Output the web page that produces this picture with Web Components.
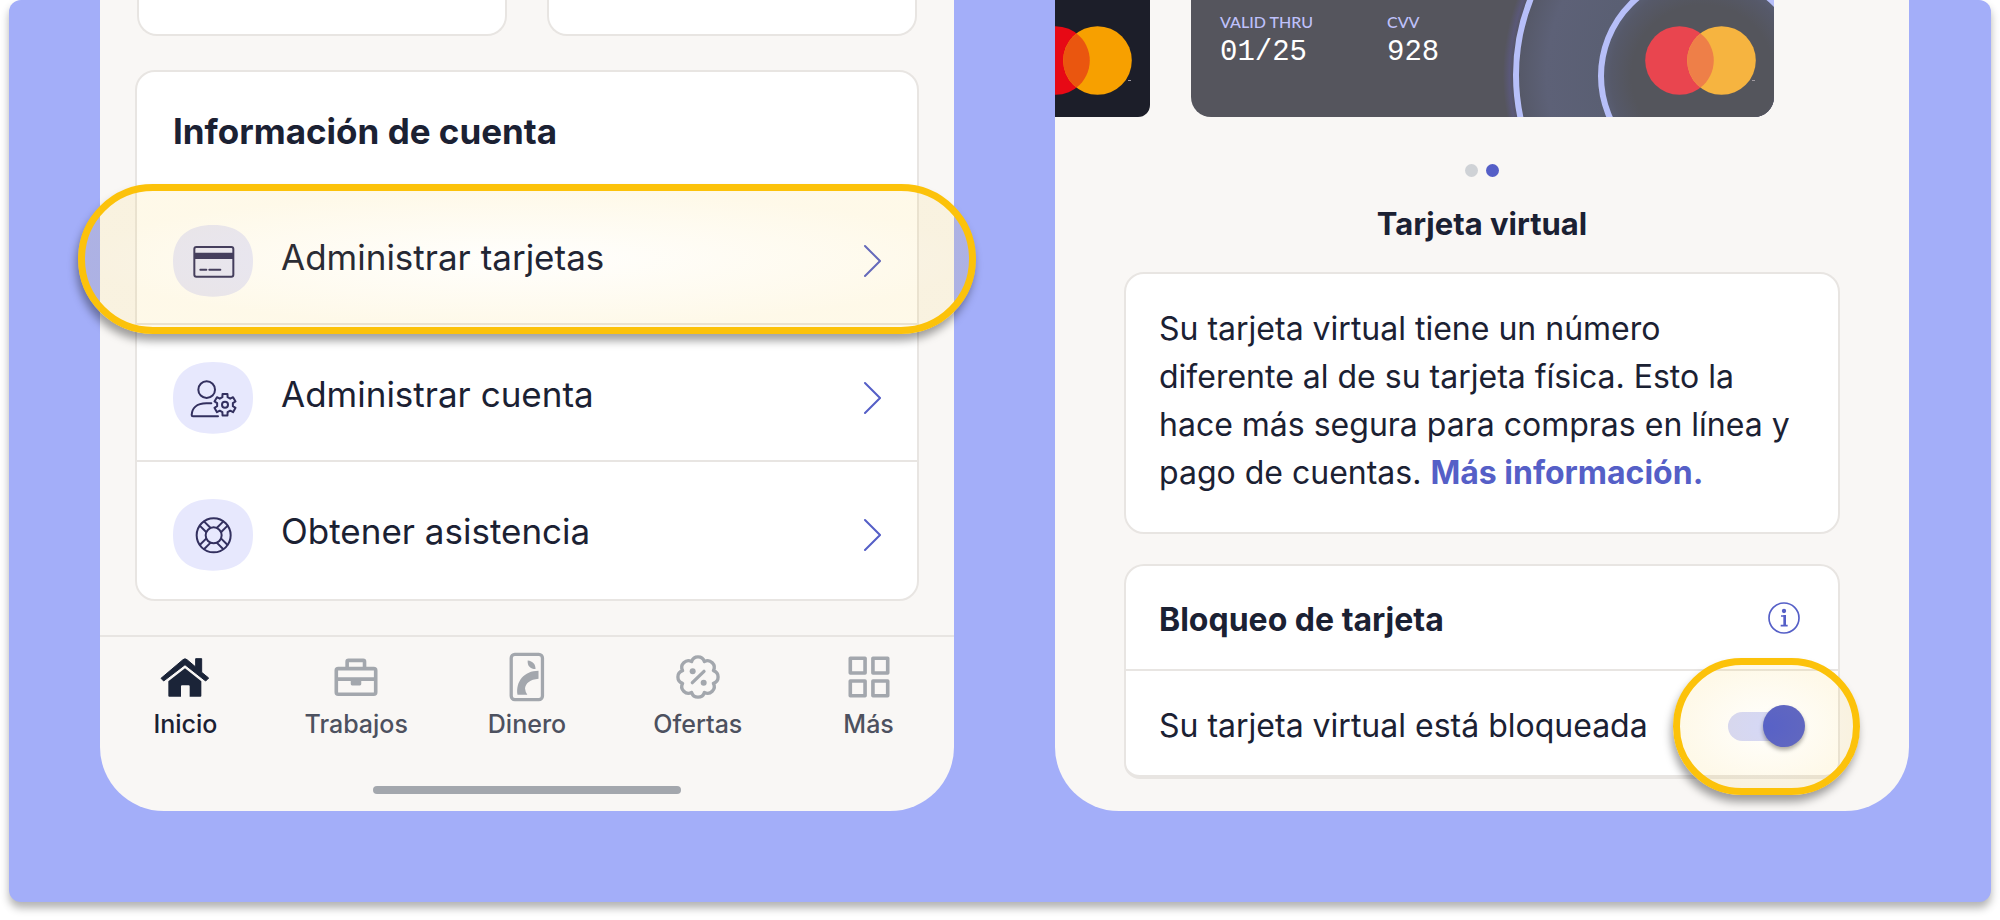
<!DOCTYPE html>
<html lang="es">
<head>
<meta charset="utf-8">
<title>Administrar tarjetas</title>
<style>
  body {
    margin: 0;
    background: #fff;
    color: #1b2133;
    font-family: Inter, "Liberation Sans", sans-serif;
    --line: #e8e5e2;
    --paper: #f9f7f5;
    --accent: #555fc7;
  }
</style>
</head>
<body>
<promo-stage>
  <phone-frame>
    <blank-tiles></blank-tiles>
    <menu-card heading="Información de cuenta">
      <menu-row icon="card" highlighted>Administrar tarjetas</menu-row>
      <menu-row icon="person">Administrar cuenta</menu-row>
      <menu-row icon="buoy">Obtener asistencia</menu-row>
    </menu-card>
    <tab-bar>
      <tab-item icon="home" current>Inicio</tab-item>
      <tab-item icon="jobs">Trabajos</tab-item>
      <tab-item icon="money">Dinero</tab-item>
      <tab-item icon="offers">Ofertas</tab-item>
      <tab-item icon="more">Más</tab-item>
    </tab-bar>
  </phone-frame>
  <phone-frame>
    <card-carousel></card-carousel>
    <info-panel>Su tarjeta virtual tiene un número diferente al de su tarjeta física. Esto la hace más segura para compras en línea y pago de cuentas. <a href="#info">Más información.</a></info-panel>
    <lock-panel heading="Bloqueo de tarjeta">Su tarjeta virtual está bloqueada</lock-panel>
  </phone-frame>
</promo-stage>

<script>
const define = (name, render) => customElements.define(name, class extends HTMLElement {
  constructor() {
    super();
    this.attachShadow({ mode: 'open' });
  }
  connectedCallback() {
    this.shadowRoot.innerHTML = render(this);
  }
});

/* Outline of a cog with evenly spaced rounded teeth. */
function cog(cx, cy, teeth, outer, root) {
  const pts = [];
  for (let i = 0; i < teeth; i++) {
    const mid = -90 + i * 360 / teeth;
    for (const [off, r] of [[-19, root], [-13, outer], [13, outer], [19, root]]) {
      const a = (mid + off) * Math.PI / 180;
      pts.push((cx + r * Math.cos(a)).toFixed(1) + ' ' + (cy + r * Math.sin(a)).toFixed(1));
    }
  }
  return 'M' + pts.join('L') + 'Z';
}

const spokes = [45, 135, 225, 315].map(a =>
  `<path transform="translate(122 109) rotate(${a})" d="M23 -9H49M23 9H49"/>`).join('');

const rowIcons = {
  card: `<rect x="64" y="66" width="117" height="89" rx="6"/><path fill="#33305f" stroke="none" d="M64 83h117v19H64z"/><path d="M82 134h18M109 134h33"/>`,
  person: `<circle cx="101" cy="83" r="25"/><path d="M115 124H100C70 124 57 140 56 159Q56 163 60 163H135"/><path d="${cog(156, 128, 6, 33, 24)}"/><circle cx="156" cy="128" r="9"/>`,
  buoy: `<circle cx="122" cy="109" r="51"/><circle cx="122" cy="109" r="24"/>${spokes}`
};

const tabIcons = {
  home: `<svg width="50" height="39" viewBox="245 112 150 117" fill="currentColor"><path stroke="currentColor" stroke-width="3" stroke-linejoin="round" d="M248 173L314 117q6-5 12 0L352 139V114h18V155L391 172L382 181L320 132L256 181Z"/><path d="M320 143L369 182V225q0 3-3 3H334V197q0-3-3-3H311q-3 0-3 3V228H273q-3 0-3-3V182Z"/></svg>`,
  jobs: `<svg width="44" height="39" viewBox="764 112 134 118" fill="none" stroke="currentColor" stroke-width="11"><rect x="771" y="144" width="120" height="78" rx="6"/><path d="M771 176H891M804 142V123q0-4 4-4h45q4 0 4 4V142"/><rect x="815" y="176" width="32" height="19" rx="4" fill="currentColor" stroke="none"/></svg>`,
  money: `<svg width="36" height="50" viewBox="1288 95 108 152" fill="currentColor"><rect x="1294" y="102" width="95" height="138" rx="11" fill="none" stroke="currentColor" stroke-width="10"/><path d="M1344 121C1360 123 1368 132 1368 147C1352 147 1343 138 1344 121ZM1377 152V176C1352 178 1337 190 1336 206Q1337 217 1343 225H1313C1307 185 1333 152 1377 152Z"/></svg>`,
  offers: `<svg width="44" height="44" viewBox="407 104 132 132" fill="none" stroke="currentColor" stroke-width="10" stroke-linecap="round" stroke-linejoin="round"><path d="M519.2 150.9A20 20 0 0 1 519.2 189.1A20 20 0 0 1 492.1 216.2A20 20 0 0 1 453.9 216.2A20 20 0 0 1 426.8 189.1A20 20 0 0 1 426.8 150.9A20 20 0 0 1 453.9 123.8A20 20 0 0 1 492.1 123.8A20 20 0 0 1 519.2 150.9Z"/><path d="M456 187L491 153"/><g fill="currentColor" stroke="none"><circle cx="457" cy="153" r="9"/><circle cx="490" cy="187" r="9"/></g></svg>`,
  more: `<svg width="42" height="42" viewBox="920 107 126 128" fill="none" stroke="currentColor" stroke-width="11" stroke-linejoin="round"><path d="M926 114h45v45h-45zM995 114h45v45h-45zM926 183h45v45h-45zM995 183h45v45h-45z"/></svg>`
};

/* Lavender backdrop that holds the two phones. */
define('promo-stage', () => `
  <style>
    :host {
      display: grid;
      grid-template-columns: 1fr 1fr;
      gap: 101px;
      margin: 0 9px 18px;
      padding: 0 82px 91px 91px;
      border-radius: 12px;
      background: #a3aef9;
      box-shadow: 0 6px 8px rgba(0, 0, 0, .3);
    }
  </style>
  <slot></slot>`);

define('phone-frame', () => `
  <style>
    :host {
      display: flex;
      flex-direction: column;
      min-width: 0;
      border-radius: 0 0 64px 64px;
      background: var(--paper);
    }
  </style>
  <slot></slot>`);

define('blank-tiles', () => `
  <style>
    :host { display: grid; grid-template-columns: 1fr 1fr; gap: 40px; margin: 0 37px; }
    div { height: 34px; border: 2px solid var(--line); border-top: 0; border-radius: 0 0 20px 20px; background: #fff; }
  </style>
  <div></div><div></div>`);

define('menu-card', el => `
  <style>
    :host { display: block; margin: 34px 35px; border: 2px solid var(--line); border-radius: 20px; background: #fff; }
    h2 { margin: 0; padding: 35px 36px 33px; font-size: 35px; line-height: 48px; font-weight: 700; }
  </style>
  <h2>${el.getAttribute('heading')}</h2>
  <slot></slot>`);

define('menu-row', el => `
  <style>
    :host { display: block; position: relative; border-bottom: 2px solid var(--line); }
    :host(:last-child) { border-bottom: 0; padding-bottom: 2px; }
    a {
      display: flex;
      align-items: center;
      gap: 28px;
      padding: 37px 36px 26px;
      color: inherit;
      text-decoration: none;
      font-size: 35px;
      line-height: 48px;
    }
    svg { flex: none; }
    .label { flex: 1; margin-bottom: 8px; }
  </style>
  <a href="#${el.getAttribute('icon')}">
    <svg width="80" height="72" viewBox="0 0 240 216" fill="none" stroke="#33305f" stroke-width="6" stroke-linecap="round" stroke-linejoin="round" aria-hidden="true">
      <path fill="#e7e8fd" stroke="none" d="M0 108C0 36 46 0 120 0S240 36 240 108S194 215 120 215S0 180 0 108Z"/>
      ${rowIcons[el.getAttribute('icon')]}
    </svg>
    <span class="label"><slot></slot></span>
    <svg width="18" height="34" viewBox="0 0 18 34" fill="none" stroke="#555fc7" stroke-width="2" stroke-linecap="round" aria-hidden="true"><path d="M2 2L17 17L2 32"/></svg>
  </a>
  ${el.hasAttribute('highlighted') ? '<focus-ring style="inset: -4px -59px -11px"></focus-ring>' : ''}`);

/* Amber outline laid over whatever it points out. */
define('focus-ring', () => `
  <style>
    :host {
      position: absolute;
      z-index: 1;
      box-sizing: border-box;
      border: 7px solid #fcc20a;
      border-radius: 75px;
      background: radial-gradient(closest-side, rgba(250, 210, 80, .01), rgba(248, 205, 70, .12));
      box-shadow: -2px 7px 9px rgba(0, 0, 0, .36);
      pointer-events: none;
    }
  </style>`);

define('tab-bar', () => `
  <style>
    :host { display: block; border-top: 2px solid var(--line); }
    nav { display: grid; grid-template-columns: repeat(5, 1fr); padding: 14px 0 45px; }
    .handle { width: 36%; height: 8px; margin: 0 auto 17px; border-radius: 4px; background: #a3a7ad; }
  </style>
  <nav><slot></slot></nav>
  <div class="handle"></div>`);

define('tab-item', el => `
  <style>
    :host { display: block; color: #a3a7ad; }
    :host([current]) { color: #1b2438; }
    a { display: flex; flex-direction: column; align-items: center; gap: 4px; color: inherit; text-decoration: none; }
    .icon { display: flex; align-items: center; height: 52px; }
    .label { color: #4d515f; font-size: 25px; line-height: 34px; font-weight: 500; }
    :host([current]) .label { color: #1b2133; }
  </style>
  <a href="#${el.getAttribute('icon')}">
    <span class="icon" aria-hidden="true">${tabIcons[el.getAttribute('icon')]}</span>
    <span class="label"><slot></slot></span>
  </a>`);

define('card-carousel', () => `
  <style>
    :host { display: block; }
    .track { display: flex; gap: 41px; overflow: hidden; padding-right: 135px; }
    payment-card[tone="dark"] { flex: 0 0 95px; }
    payment-card[tone="slate"] { flex: 1; }
    .dots { display: flex; justify-content: center; gap: 8px; margin: 47px 0 23px; }
    .dots button { width: 13px; height: 13px; padding: 0; border: 0; border-radius: 50%; background: #cfd2d6; }
    .dots .on { background: var(--accent); }
    h2 { margin: 0; text-align: center; font-size: 31px; line-height: 48px; font-weight: 700; }
  </style>
  <div class="track"><payment-card tone="dark"></payment-card><payment-card tone="slate"></payment-card></div>
  <div class="dots"><button aria-label="Tarjeta 1"></button><button class="on" aria-label="Tarjeta 2"></button></div>
  <h2>Tarjeta virtual</h2>`);

define('payment-card', el => {
  const slate = el.getAttribute('tone') === 'slate';
  const [red, mix, gold] = slate ? ['#e9454f', '#ee7f48', '#f6b440'] : ['#e70915', '#ea560f', '#f7a000'];
  return `
  <style>
    :host {
      display: flex;
      position: relative;
      box-sizing: border-box;
      align-items: flex-end;
      justify-content: flex-end;
      height: 117px;
      padding: 0 18px 22px 0;
      overflow: hidden;
      border-radius: 0 0 12px 0;
      background: #1c1e29;
    }
    :host([tone="slate"]) { padding-left: 29px; border-radius: 0 0 20px 20px; background: #55555d; }
    .rings { position: absolute; right: 0; bottom: 0; }
    .brand { position: relative; flex: none; }
    dl { display: grid; grid-template-columns: 167px auto; margin: 0 auto 23px 0; position: relative; }
    dt { color: #bfc1fb; font: 500 16px/24px Lato, sans-serif; grid-row: 1; }
    dd { margin: 0; color: #fff; font: 29px/38px "Liberation Mono", monospace; grid-row: 2; }
  </style>
  ${slate ? `
  <svg class="rings" width="300" height="117" viewBox="0 0 300 117" aria-hidden="true">
    <defs>
      <radialGradient id="band" gradientUnits="userSpaceOnUse" cx="247" cy="75" r="218">
        <stop offset=".5" stop-color="#5b5b80"/><stop offset=".56" stop-color="#5a5f73"/><stop offset=".8" stop-color="#5d6177"/><stop offset=".92" stop-color="#565969"/><stop offset=".94" stop-color="#54545c"/><stop offset=".97" stop-color="#5a5878"/><stop offset="1" stop-color="#55555d"/>
      </radialGradient>
      <radialGradient id="core" gradientUnits="userSpaceOnUse" cx="229" cy="76" r="102">
        <stop offset=".7" stop-color="#54555c"/><stop offset=".9" stop-color="#565969"/><stop offset="1" stop-color="#5a5f75"/>
      </radialGradient>
    </defs>
    <circle cx="247" cy="75" r="218" fill="url(#band)"/>
    <circle cx="247" cy="75" r="205" fill="none" stroke="#b7bff9" stroke-width="6"/>
    <circle cx="229" cy="76" r="102" fill="url(#core)" stroke="#b7bff9" stroke-width="6"/>
  </svg>
  <dl><dt>VALID THRU</dt><dd>01/25</dd><dt>CVV</dt><dd>928</dd></dl>` : ''}
  <svg class="brand" width="111" height="69" viewBox="0 0 111 69" aria-hidden="true">
    <circle cx="34.5" cy="34.5" r="34.3" fill="${red}"/><circle cx="76.5" cy="34.5" r="34.3" fill="${gold}"/>
    <path fill="${mix}" d="M55.5 7.4A34.3 34.3 0 0 1 55.5 61.6A34.3 34.3 0 0 1 55.5 7.4Z"/>
    <path stroke="#a09aa0" d="M107 54.5h3"/>
  </svg>`;
});

define('info-panel', () => `
  <style>
    :host { display: block; margin: 24px 69px 30px; border: 2px solid var(--line); border-radius: 20px; background: #fff; }
    p { margin: 0; padding: 31px 43px 35px 33px; font-size: 32px; line-height: 48px; }
    ::slotted(a) { color: var(--accent); font-weight: 700; text-decoration: none; }
  </style>
  <p><slot></slot></p>`);

define('lock-panel', el => `
  <style>
    :host { display: block; margin: 0 69px; border: 2px solid var(--line); border-bottom-width: 4px; border-radius: 20px 20px 16px 16px; background: #fff; font-size: 32px; line-height: 48px; }
    header, .row { display: flex; align-items: center; justify-content: space-between; }
    header { padding: 26px 38px 25px 33px; border-bottom: 2px solid var(--line); }
    h2 { margin: 0; padding-top: 4px; font-size: inherit; font-weight: 700; }
    button { display: block; width: 32px; height: 32px; padding: 0; border: 0; background: none; }
    button svg { display: block; }
    .row { padding: 31px 33px 25px; }
    .switch { display: flex; position: relative; padding: 7px 15px 7px 0; }
    input {
      appearance: none;
      display: flex;
      align-items: center;
      justify-content: flex-end;
      width: 62px;
      height: 29px;
      margin: 0;
      border-radius: 15px;
      background: #d5d8f8;
    }
    input::after { content: ""; flex: none; width: 42px; height: 42px; margin-right: -15px; border-radius: 50%; background: #5660c8; box-shadow: 0 3px 4px rgba(0, 0, 0, .35); }
  </style>
  <header>
    <h2>${el.getAttribute('heading')}</h2>
    <button aria-label="Ayuda"><svg width="32" height="32" viewBox="684 183 96 96" fill="none" stroke="#555fc7" stroke-width="5"><circle cx="732" cy="231" r="45"/><circle cx="732" cy="210" r="6.5" fill="#555fc7" stroke="none"/><path stroke-width="8" d="M734 222V254"/><path d="M723 225H736M722 254H743"/></svg></button>
  </header>
  <div class="row">
    <label for="lock"><slot></slot></label>
    <span class="switch"><input id="lock" type="checkbox" role="switch" checked><focus-ring style="inset: -47px -55px"></focus-ring></span>
  </div>`);
</script>
</body>
</html>
